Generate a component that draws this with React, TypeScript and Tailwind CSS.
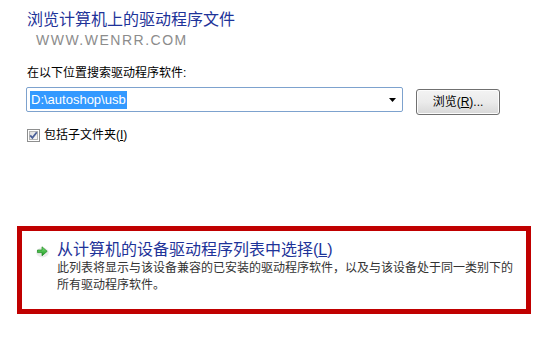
import React from 'react';

const FONT = { fontFamily: '"Liberation Sans", "Noto Sans CJK SC", sans-serif' };

function CheckBox() {
  return (
    <svg width="13" height="13" viewBox="0 0 13 13" className="shrink-0">
      <defs>
        <linearGradient id="cb" x1="0" y1="0" x2="1" y2="1">
          <stop offset="0" stopColor="#dcdcdc" />
          <stop offset="1" stopColor="#fbfbfb" />
        </linearGradient>
      </defs>
      <rect x="0.5" y="0.5" width="12" height="12" fill="#fff" stroke="#8e8f8f" />
      <rect x="2.5" y="2.5" width="8" height="8" fill="url(#cb)" stroke="#b5b5b5" />
      <path d="M3.2 6.4 L5.4 8.8 L9.8 3.2" fill="none" stroke="#4a5f97" strokeWidth="1.8" />
    </svg>
  );
}

function GreenArrow() {
  return (
    <svg width="13" height="13" viewBox="0 0 13 13" className="shrink-0">
      <defs>
        <linearGradient id="ga" x1="0" y1="0" x2="0" y2="1">
          <stop offset="0" stopColor="#7fe07a" />
          <stop offset="1" stopColor="#1c9a21" />
        </linearGradient>
      </defs>
      <ellipse cx="6.5" cy="7.5" rx="6.3" ry="5" fill="#000" opacity="0.08" />
      <path d="M1.5 5 H6 V1.8 L11.2 6.3 L6 10.8 V7.6 H1.5 Z" fill="url(#ga)" stroke="#1a8a1e" strokeWidth="0.7" />
    </svg>
  );
}

export default function App() {
  return (
    <div className="relative w-[545px] h-[351px] bg-white overflow-hidden" style={FONT}>
      <div className="pl-[27px] pt-[9px]">
        <div className="text-[16px] leading-[22px] text-[#1e3399]">浏览计算机上的驱动程序文件</div>
        <div className="pl-[9px] mt-[-1px] text-[14px] leading-[20px] tracking-[1.5px] text-[#8c8c8c]">
          WWW.WENRR.COM
        </div>

        <div className="mt-[15px] text-[12px] leading-[16px] text-black">在以下位置搜索驱动程序软件:</div>

        <div className="mt-[6px] flex items-start">
          <div className="ml-[-1px] w-[377px] h-[25px] border border-[#7da2ce] rounded-[2px] flex items-center pl-[3px] pr-[6px]">
            <span className="bg-[#3399ff] text-white text-[13px] leading-[18px] px-[1px]">D:\autoshop\usb</span>
            <span className="flex-1" />
            <svg width="7" height="4" viewBox="0 0 7 4">
              <path d="M0 0 H7 L3.5 4 Z" fill="#000" />
            </svg>
          </div>
          <button className="ml-[13px] mt-[2px] w-[84px] h-[26px] border border-[#707070] rounded-[3px] bg-gradient-to-b from-[#f3f3f3] via-[#ebebeb] to-[#d8d8d8] text-[12px] text-black shadow-[inset_0_0_0_1px_#fcfcfc]">
            浏览(<span className="underline">R</span>)...
          </button>
        </div>

        <div className="mt-[12px] flex items-center gap-[4px] text-[12px] leading-[16px] text-black">
          <CheckBox />
          <span>
            包括子文件夹(<span className="underline">I</span>)
          </span>
        </div>
      </div>

      <div className="absolute left-[17px] top-[226px] w-[514px] h-[88px] border-[5px] border-[#c00000]">
        <div className="pl-[14px] pt-[9px] flex">
          <div className="pt-[5px] pr-[8px]">
            <GreenArrow />
          </div>
          <div>
            <div className="text-[16px] leading-[20px] text-[#1e3399]">
              从计算机的设备驱动程序列表中选择(<span className="underline">L</span>)
            </div>
            <div className="text-[12px] leading-[17px] text-[#333]">
              此列表将显示与该设备兼容的已安装的驱动程序软件，以及与该设备处于同一类别下的
              <br />
              所有驱动程序软件。
            </div>
          </div>
        </div>
      </div>
    </div>
  );
}
